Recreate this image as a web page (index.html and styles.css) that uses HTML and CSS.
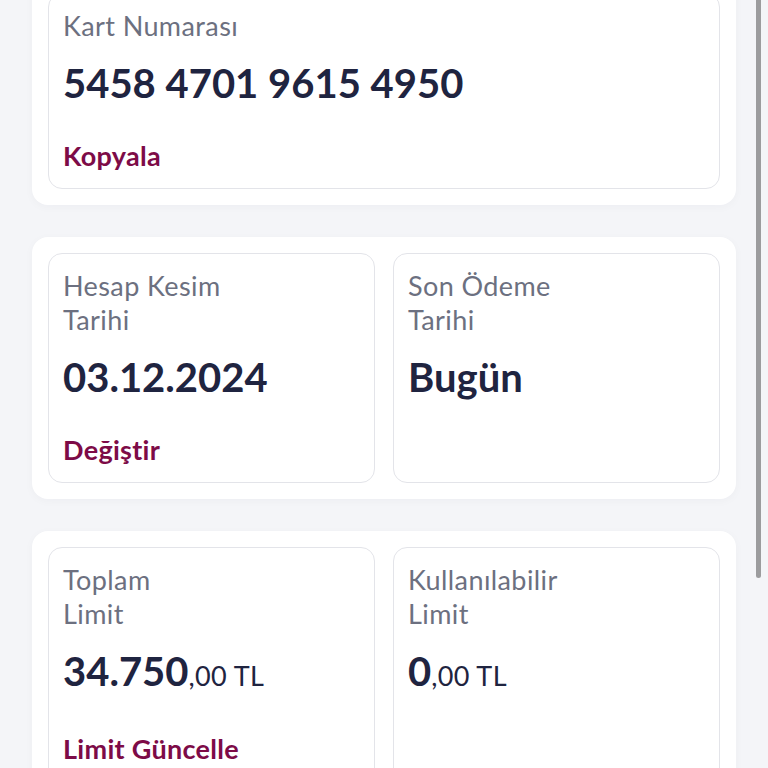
FILE: index.html
```html
<!DOCTYPE html>
<html lang="tr">
  <head>
    <meta charset="UTF-8" />
    <meta name="viewport" content="width=device-width, initial-scale=1.0" />
    <title>Kart Detayı</title>
    <link rel="stylesheet" href="styles.css">
  </head>

  <body>
    <main class="page">
      <section class="panel">
        <div class="info-card">
          <div class="info-card__label">Kart Numarası</div>
          <div class="info-card__value">5458 4701 9615 4950</div>
          <a class="info-card__link" href="#">Kopyala</a>
        </div>
      </section>

      <section class="panel panel--split">
        <div class="info-card">
          <div class="info-card__label">Hesap Kesim<br>Tarihi</div>
          <div class="info-card__value">03.12.2024</div>
          <a class="info-card__link" href="#">Değiştir</a>
        </div>
        <div class="info-card">
          <div class="info-card__label">Son Ödeme<br>Tarihi</div>
          <div class="info-card__value">Bugün</div>
        </div>
      </section>

      <section class="panel panel--split">
        <div class="info-card">
          <div class="info-card__label">Toplam<br>Limit</div>
          <div class="info-card__value">34.750<span class="info-card__cents">,00 TL</span></div>
          <a class="info-card__link" href="#">Limit Güncelle</a>
        </div>
        <div class="info-card">
          <div class="info-card__label">Kullanılabilir<br>Limit</div>
          <div class="info-card__value">0<span class="info-card__cents">,00 TL</span></div>
        </div>
      </section>
    </main>
    <div class="scroll-thumb"></div>
  </body>
</html>
```
FILE: styles.css
```css
html,
body {
  margin: 0;
  background: #f4f5f8;
  font-family: Lato, "Noto Sans", sans-serif;
}

.page {
  display: flex;
  flex-direction: column;
  gap: 32px;
  padding: 0 32px 32px;
  margin-top: -23px;
}

.panel {
  background: #fff;
  border-radius: 16px;
  padding: 16px;
  box-shadow: 0 2px 10px rgba(30, 35, 60, 0.03);
}

.panel--split {
  display: grid;
  grid-template-columns: 1fr 1fr;
  gap: 18px;
}

.info-card {
  border: 1px solid #e3e4e9;
  border-radius: 14px;
  padding: 15px 14px 15px;
  display: flex;
  flex-direction: column;
  align-items: flex-start;
}

.info-card__label {
  font-size: 27px;
  line-height: 34px;
  letter-spacing: 0.4px;
  color: #6c7080;
}

.info-card__value {
  margin-top: 16px;
  font-size: 40px;
  line-height: 48px;
  font-weight: 700;
  color: #1f2440;
}

.info-card__cents {
  font-size: 27px;
  font-weight: 400;
  letter-spacing: 0.4px;
}

.info-card__link {
  margin-top: 32px;
  font-size: 27px;
  line-height: 34px;
  letter-spacing: 0.3px;
  font-weight: 700;
  color: #7d0b47;
  text-decoration: none;
}

.scroll-thumb {
  position: fixed;
  top: 0;
  right: 7px;
  width: 5px;
  height: 578px;
  border-radius: 0 0 3px 3px;
  background: #9c9c9e;
}
```
